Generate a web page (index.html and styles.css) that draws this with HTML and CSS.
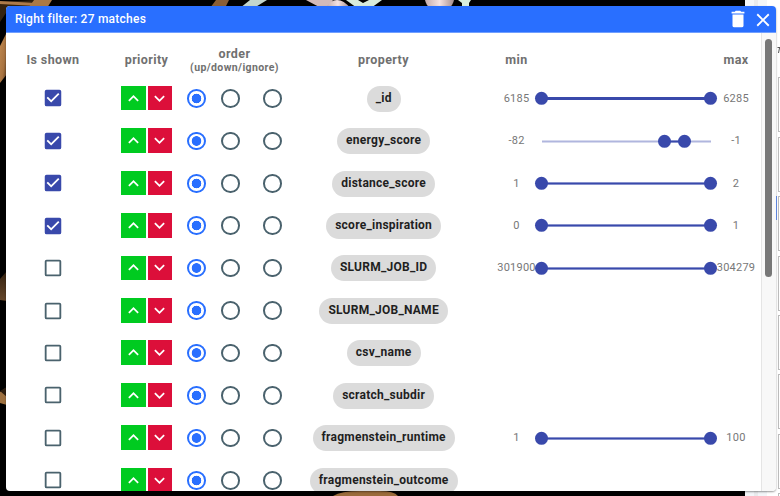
FILE: index.html
```html
<!DOCTYPE html>
<html lang="en">
<head>
<meta charset="utf-8">
<title>Right filter</title>
<link rel="stylesheet" href="styles.css">
</head>
<body>
<svg class="scene" width="780" height="496" viewBox="0 0 780 496" aria-hidden="true">
  <defs>
    <linearGradient id="tan" x1="0" y1="0" x2="1" y2="1"><stop offset="0" stop-color="#c08950"/><stop offset=".6" stop-color="#a87340"/><stop offset="1" stop-color="#5a3a1e"/></linearGradient>
    <linearGradient id="ball"><stop offset="0" stop-color="#c3abab"/><stop offset=".5" stop-color="#f5e2e2"/><stop offset="1" stop-color="#a58e8e"/></linearGradient>
    <linearGradient id="shade" x1="0" y1="0" x2="0" y2="1"><stop offset="0" stop-color="#33210f"/><stop offset="1" stop-color="#65462a"/></linearGradient>
  </defs>
  <rect width="780" height="496" fill="#000"/>
  <path d="M0 2L34 0 28 8 8 10 0 22z" fill="#35230f"/>
  <path d="M0 1L36 3V6L0 4z" fill="#ad7a49"/>
  <path d="M34 0H52L47 8H28z" fill="#ab7945"/>
  <path d="M0 46L7 32V74L0 83z" fill="url(#tan)"/>
  <path d="M0 279L7 271V301L0 300z" fill="url(#shade)"/>
  <path d="M0 392L7 387V405L0 403z" fill="#9d703f"/>
  <path d="M0 391L7 387V397z" fill="#2c1d0f"/>
  <path d="M216 0H229L225 8H210z" fill="#8a5e35"/>
  <path d="M250 0H267L254 8H240z" fill="#c3d6cd"/>
  <path d="M306 0H333L328 8H321z" fill="#d2baba"/>
  <path d="M326 8Q330 0 337 0T350 8z" fill="url(#ball)"/>
  <path d="M346 0H358L363 3 369 0H382L371 8H357z" fill="#d8ebdc"/>
  <path d="M425 0H454Q453 5 449 8H430Q426 5 425 0z" fill="url(#ball)"/>
  <path d="M458 0H471L469 3V8H462V3z" fill="#d7eedd"/>
  <path d="M333 496Q341 491 360 491H380Q394 491 398 496z" fill="#9a6b3b"/>
  <rect x="745" width="35" height="496" fill="#f3f6f9"/>
  <path d="M754 0H758V496H754z" fill="#e9ebed"/>
  <rect x="767" y="0" width="13" height="496" fill="#fff"/>
  <g fill="#fff" stroke="#bcbcbc">
    <rect x="778.5" y="77.5" width="8" height="54"/><rect x="778.5" y="137.5" width="8" height="54"/>
    <rect x="778.5" y="196.5" width="8" height="54"/><rect x="778.5" y="256.5" width="8" height="54"/>
    <rect x="778.5" y="315.5" width="8" height="54"/><rect x="778.5" y="374.5" width="8" height="54"/>
    <rect x="778.5" y="434.5" width="8" height="54"/><rect x="778.5" y="493.5" width="8" height="54"/>
  </g>
  <path d="M776.5 196V220" stroke="#6793f5"/>
  <path d="M777.5 47.5H780M779.5 48L778.5 53" stroke="#555"/>
</svg>
<svg class="symbols" aria-hidden="true">
  <symbol id="check" viewBox="0 0 24 24"><path d="M19 3H5a2 2 0 0 0-2 2v14a2 2 0 0 0 2 2h14a2 2 0 0 0 2-2V5a2 2 0 0 0-2-2zm-9 14l-5-5 1.41-1.41L10 14.17l7.59-7.59L19 8z"/></symbol>
  <symbol id="uncheck" viewBox="0 0 24 24"><path d="M19 5v14H5V5h14m0-2H5a2 2 0 0 0-2 2v14a2 2 0 0 0 2 2h14a2 2 0 0 0 2-2V5a2 2 0 0 0-2-2z"/></symbol>
  <symbol id="up" viewBox="0 0 24 24"><path d="M7.41 15.41L12 10.83l4.59 4.58L18 14l-6-6-6 6z"/></symbol>
  <symbol id="down" viewBox="0 0 24 24"><path d="M7.41 8.59L12 13.17l4.59-4.58L18 10l-6 6-6-6z"/></symbol>
</svg>
<main class="panel">
  <header class="titlebar">
    <span class="title">Right filter: 27 matches</span>
    <svg class="trash" viewBox="0 0 24 24"><path d="M6 19a2 2 0 0 0 2 2h8a2 2 0 0 0 2-2V7H6z"/><path d="M19 4h-3.500l-1-1h-5l-1 1H5v2h14z"/></svg>
    <svg class="close" viewBox="0 0 24 24"><path d="M19 6.410L17.590 5 12 10.590 6.410 5 5 6.410 10.590 12 5 17.590 6.410 19 12 13.410 17.590 19 19 17.590 13.410 12z"/></svg>
  </header>
  <div class="body">
    <div class="table">
      <div class="row head">
        <span>Is shown</span><span>priority</span>
        <span class="order">order<small>(up/down/ignore)</small></span>
        <span>property</span><span>min</span><span></span><span>max</span>
      </div>
      <div id="rows"></div>
    </div>
    <div class="scrollbar"><div class="thumb"></div></div>
  </div>
</main>
<script src="app.js"></script>
</body>
</html>
```
FILE: styles.css
```css
* { box-sizing: border-box; }
body { margin: 0; width: 780px; height: 496px; padding: 6px 4px 5px 6px; overflow: hidden; background: #000; font-family: Roboto, sans-serif; letter-spacing: .4px; }
.scene { position: absolute; left: 0; top: 0; z-index: -1; }
.symbols { display: none; }
.panel { width: 770px; height: 484.5px; display: flex; flex-direction: column; overflow: hidden; border-radius: 4px; background: #fff; box-shadow: 0 1px 2px #0006; }
.titlebar { flex: 0 0 27px; display: flex; align-items: center; padding: 0 2px 0 9px; background: #296fff; border-bottom: 1px solid #709fff; color: #fff; }
.title { flex: 1; font-size: 12px; font-weight: 500; line-height: 24px; letter-spacing: .24px; }
.titlebar svg { width: 22px; height: 22px; fill: #fff; }
.titlebar .close { margin-left: 3px; position: relative; top: 1px; }
.body { flex: 1; min-height: 0; display: flex; }
.table { width: 755px; overflow: hidden; flex: none; }
.row { display: grid; grid-template-columns: 94px 93px 83px 215px 51px 169px 50px; height: 42.43px; align-items: center; justify-items: center; }
.head { height: 44px; padding-top: 8px; color: #707070; font-size: 12.5px; font-weight: 700; }
.order { display: flex; flex-direction: column; align-items: center; line-height: 14px; padding-top: 2px; }
.order small { font-size: 10.5px; line-height: 13px; }
.check { width: 22px; height: 22px; margin: .5px 0 0 .4px; fill: #4a626d; }
.check.on { fill: #3949ab; }
.priority { display: flex; gap: 2px; }
.priority span { width: 24.5px; height: 24.5px; display: grid; place-items: center; background: #00cb20; }
.priority .lower { background: #dc0f3a; }
.priority svg { width: 21px; height: 21px; fill: #fff; }
.radios { width: 98px; display: grid; grid-template-columns: 34px 42px 22px; margin: .5px 0 0 3px; }
.radio { width: 18.5px; height: 18.5px; border: 2px solid #4a626d; border-radius: 50%; }
.radio.on { border-color: #296fff; background: radial-gradient(circle, #296fff 4.5px, transparent 5.1px); }
.chip { height: 26px; margin: 1px 0 0 .3px; padding: 0 9px; border-radius: 13px; background: #dbdbdb; color: #1f1f1f; font-size: 12px; font-weight: 700; line-height: 25px; letter-spacing: .25px; white-space: nowrap; }
.value { color: #777; font-size: 11px; letter-spacing: .25px; }
.slider { width: 169px; height: 14px; display: block; overflow: visible; }
.scrollbar { width: 15px; padding: 5.5px 4px 5.5px 3px; background: #f8f8f8; border-left: 1px solid #e5e5e5; }
.thumb { width: 7px; height: 238px; border-radius: 4px; background: #777; }
```
FILE: app.js
```js
const properties = [
  ["_id", true, "6185", "6285", 0, 169],
  ["energy_score", true, "-82", "-1", 123, 143],
  ["distance_score", true, "1", "2", 0, 169],
  ["score_inspiration", true, "0", "1", 0, 169],
  ["SLURM_JOB_ID", false, "301900", "304279", 0, 169],
  ["SLURM_JOB_NAME", false],
  ["csv_name", false],
  ["scratch_subdir", false],
  ["fragmenstein_runtime", false, "1", "100", 0, 169],
  ["fragmenstein_outcome", false]
];
const icon = (id, cls = "") => `<svg class="${cls}"><use href="#${id}"/></svg>`;
const slider = (from, to, weight) => `<svg class="slider">
  <path d="M0 7.5H169" stroke="#b0b6de" stroke-width="2"/>
  <path d="M${from} 7.5H${to}" stroke="#3949ab" stroke-width="${weight}"/>
  <circle cx="${from - 0.5}" cy="7.3" r="6.5" fill="#3949ab"/><circle cx="${to - 0.5}" cy="7.3" r="6.5" fill="#3949ab"/></svg>`;
document.getElementById("rows").innerHTML = properties.map(([name, shown, min, max, from, to], i) => `
  <div class="row">
    ${icon(shown ? "check" : "uncheck", shown ? "check on" : "check")}
    <div class="priority"><span>${icon("up")}</span><span class="lower">${icon("down")}</span></div>
    <div class="radios"><i class="radio on"></i><i class="radio"></i><i class="radio"></i></div>
    <span class="chip">${name}</span>
    ${min === undefined ? "" : `<span class="value">${min}</span>${slider(from, to, i ? 2 : 3)}<span class="value">${max}</span>`}
  </div>`).join("");
```
